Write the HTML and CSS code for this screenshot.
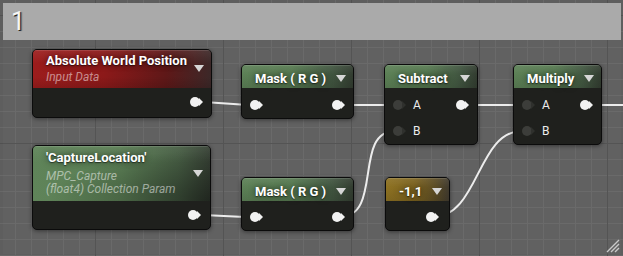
FILE: index.html
```html
<!DOCTYPE html>
<html>
<head>
<meta charset="utf-8">
<link rel="stylesheet" href="styles.css">
</head>
<body>
<div class="canvas">
  <div class="comment">
    <div class="comment-head"><span class="comment-title">1</span></div>
    <svg class="resize" width="14" height="14" viewBox="0 0 14 14">
      <path d="M1 13 L13 1 M5 13 L13 5 M9 13 L13 9" stroke="#c9c9c9" stroke-width="1.4" fill="none"/>
    </svg>
  </div>

  <svg class="wires" width="623" height="256" viewBox="0 0 623 256">
    <g fill="none" stroke="#ececec" stroke-width="2">
      <path d="M196 102 C226 102 226 105 255 105"/>
      <path d="M336 105 L399 105"/>
      <path d="M462 105 L526 105"/>
      <path d="M584 105 L623 105"/>
      <path d="M193 215 C224 215 224 217 255 217"/>
      <path d="M340 217 C383 217 353 131 395 131 L399 131"/>
      <path d="M433 217 C479 217 477 131 522 131 L526 131"/>
    </g>
  </svg>

  <div class="node n-awp">
    <div class="head head-param h-red">
      <div class="htext">
        <div class="title">Absolute World Position</div>
        <div class="sub">Input Data</div>
      </div>
      <span class="drop"></span>
    </div>
    <div class="body">
      <div class="row row-out"><span class="pin"></span></div>
    </div>
  </div>

  <div class="node n-mask1">
    <div class="head h-green">
      <div class="title">Mask ( R G )</div>
      <span class="drop"></span>
    </div>
    <div class="body">
      <div class="row"><span class="pin"></span><span class="pin"></span></div>
    </div>
  </div>

  <div class="node n-sub">
    <div class="head h-green">
      <div class="title">Subtract</div>
      <span class="drop"></span>
    </div>
    <div class="body">
      <div class="row"><span class="in"><span class="pin off"></span><span class="label">A</span></span><span class="pin"></span></div>
      <div class="row"><span class="in"><span class="pin off"></span><span class="label">B</span></span></div>
    </div>
  </div>

  <div class="node n-mul">
    <div class="head h-green">
      <div class="title">Multiply</div>
      <span class="drop"></span>
    </div>
    <div class="body">
      <div class="row"><span class="in"><span class="pin off"></span><span class="label">A</span></span><span class="pin"></span></div>
      <div class="row"><span class="in"><span class="pin off"></span><span class="label">B</span></span></div>
    </div>
  </div>

  <div class="node n-cl">
    <div class="head head-param h-green-big">
      <div class="htext">
        <div class="title">'CaptureLocation'</div>
        <div class="subs">
          <div class="sub">MPC_Capture</div>
          <div class="sub">(float4) Collection Param</div>
        </div>
      </div>
      <span class="drop"></span>
    </div>
    <div class="body">
      <div class="row row-out"><span class="pin"></span></div>
    </div>
  </div>

  <div class="node n-mask2">
    <div class="head h-green">
      <div class="title">Mask ( R G )</div>
      <span class="drop"></span>
    </div>
    <div class="body">
      <div class="row"><span class="pin"></span><span class="pin"></span></div>
    </div>
  </div>

  <div class="node n-const">
    <div class="head h-gold">
      <div class="title">-1,1</div>
      <span class="drop"></span>
    </div>
    <div class="body">
      <div class="row row-out"><span class="pin"></span></div>
    </div>
  </div>
</div>
</body>
</html>
```

FILE: styles.css
```css
* { box-sizing: border-box; margin: 0; padding: 0; }
html, body { width: 623px; height: 256px; overflow: hidden; }
body { background: #5e5e5e; font-family: Roboto, "Noto Sans", sans-serif; }

.canvas {
  position: relative;
  width: 623px;
  height: 256px;
  overflow: hidden;
  background-color: #5e5e5e;
  background-image:
    linear-gradient(90deg, #515151 1px, transparent 1px),
    linear-gradient(180deg, #515151 1px, transparent 1px),
    linear-gradient(90deg, #686868 1px, transparent 1px),
    linear-gradient(180deg, #686868 1px, transparent 1px);
  background-size: 128px 128px, 128px 128px, 16px 16px, 16px 16px;
  background-position: 95px 0, 0 143px, 15px 0, 0 15px;
}

/* comment box */
.comment {
  position: absolute;
  left: 3px;
  top: 3px;
  width: 618px;
  height: 251px;
  background: rgba(255, 255, 255, 0.02);
}
.comment-head {
  height: 37px;
  background: #aaaaaa;
  display: flex;
  align-items: center;
  padding-left: 8px;
}
.comment-title {
  font-size: 25px;
  line-height: 25px;
  color: #f6f6f6;
  text-shadow: 1px 1px 0 #262626, 2px 1px 1px rgba(0,0,0,0.35);
}
.resize { position: absolute; right: 1px; bottom: 1px; }

.wires { position: absolute; left: 0; top: 0; }

/* nodes */
.node {
  position: absolute;
  display: flex;
  flex-direction: column;
  border: 1px solid #0b0b0b;
  border-radius: 5px;
  background: #1f201d;
  overflow: hidden;
  box-shadow: 0 1px 4px rgba(0, 0, 0, 0.45);
}
.head {
  height: 23px;
  display: flex;
  align-items: center;
  justify-content: space-between;
  padding: 4px 7px 0 13px;
  color: #ffffff;
  box-shadow: inset 0 1px 0 rgba(255, 255, 255, 0.12);
}
.head-param { align-items: flex-start; padding-top: 3px; }
.head-param .drop { align-self: center; margin-bottom: 4px; }
.title {
  font-weight: 700;
  font-size: 13px;
  line-height: 15px;
  white-space: nowrap;
  text-shadow: 0 0 6px rgba(0, 0, 0, 0.65), 0 1px 1px rgba(0, 0, 0, 0.5);
}
.sub {
  font-style: italic;
  font-size: 12px;
  line-height: 14px;
  white-space: nowrap;
  color: rgba(255, 255, 255, 0.5);
  margin-top: 2px;
}
.subs { margin-top: 5px; }
.subs .sub { margin-top: 0; line-height: 13px; }
.drop {
  width: 0;
  height: 0;
  flex: none;
  border-left: 5px solid transparent;
  border-right: 5px solid transparent;
  border-top: 7px solid #d6d6d6;
}

.h-red {
  background:
    linear-gradient(180deg, rgba(255,255,255,0.08), rgba(255,255,255,0) 35%, rgba(0,0,0,0) 70%, rgba(0,0,0,0.12)),
    linear-gradient(90deg, #9c1c1c 0%, #8c1919 40%, #5e1818 75%, #3c2828 100%);
}
.h-green {
  background:
    linear-gradient(180deg, rgba(255,255,255,0.08), rgba(255,255,255,0) 40%, rgba(0,0,0,0.1)),
    linear-gradient(90deg, #5c8056 0%, #567950 45%, #415640 80%, #323c30 100%);
}
.h-green-big {
  background:
    radial-gradient(ellipse at 100% 100%, rgba(0,0,0,0.4), rgba(0,0,0,0) 65%),
    linear-gradient(180deg, rgba(255,255,255,0.06), rgba(255,255,255,0) 30%),
    linear-gradient(90deg, #5f8459 0%, #5a7d54 50%, #475e44 82%, #353f33 100%);
}
.h-gold {
  background:
    linear-gradient(180deg, rgba(255,255,255,0.08), rgba(255,255,255,0) 40%, rgba(0,0,0,0.1)),
    linear-gradient(90deg, #8e7222 0%, #7c6320 45%, #5a4b24 78%, #403a2e 100%);
}

.body { display: flex; flex-direction: column; padding: 4px 7px 0 8px; }
.row {
  height: 26px;
  display: flex;
  align-items: center;
  justify-content: space-between;
}
.row-out { justify-content: flex-end; }
.in { display: flex; align-items: center; }
.pin {
  position: relative;
  width: 10px;
  height: 10px;
  margin-right: 4px;
  border-radius: 50%;
  background: #f2f2f2;
  flex: none;
}
.pin::after {
  content: "";
  position: absolute;
  left: 9px;
  top: 1px;
  border-left: 4px solid #f2f2f2;
  border-top: 4px solid transparent;
  border-bottom: 4px solid transparent;
}
.pin.off { background: #3c3d3a; }
.pin.off::after { border-left-color: #2f302d; }
.label {
  margin-left: 6px;
  font-size: 12px;
  line-height: 14px;
  color: #ececec;
}

/* node placement on the graph canvas */
.n-awp { left: 32px; top: 49px; width: 180px; }
.n-awp .head { height: 38px; }
.n-awp .body { padding: 1px 7px 2px 8px; }

.n-mask1 { left: 241px; top: 64px; width: 113px; }
.n-sub { left: 384px; top: 64px; width: 94px; }
.n-mul { left: 513px; top: 64px; width: 89px; }

.n-cl { left: 32px; top: 145px; width: 179px; }
.n-cl .head { height: 55px; padding-top: 4px; }
.n-cl .drop { margin-bottom: 5px; }
.n-cl .body { padding: 1px 8px 1px 8px; }

.n-mask2 { left: 241px; top: 177px; width: 113px; }
.n-mask2 .body { padding-top: 3px; }
.n-const { left: 385px; top: 177px; width: 65px; }
.n-const .body { padding: 3px 9px 0 8px; }
```
